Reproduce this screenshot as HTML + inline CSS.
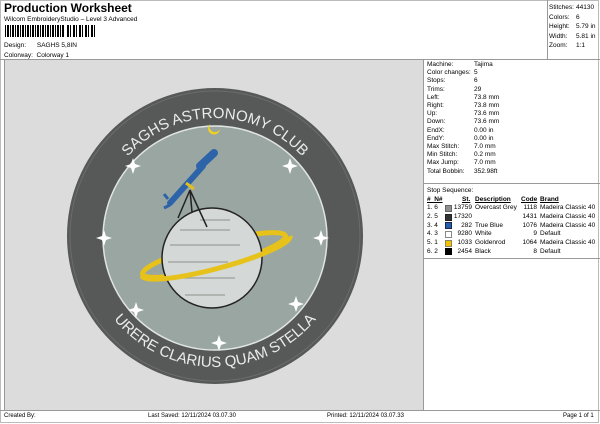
<!DOCTYPE html>
<html><head><style>
body{margin:0;width:600px;height:424px;background:#fff;font-family:"Liberation Sans",Arial,sans-serif;position:relative;overflow:hidden;color:#000}
.a{position:absolute;white-space:nowrap;font-size:6.5px;line-height:9px}
</style></head><body>
<div class="a" style="left:4px;top:1px;font-size:12px;font-weight:bold;line-height:14px">Production Worksheet</div>
<div class="a" style="left:4px;top:15px">Wilcom EmbroideryStudio – Level 3 Advanced</div>
<div class="a" style="left:5px;top:25px;width:60px;height:12px;background:repeating-linear-gradient(90deg,#000 0 1px,#fff 1px 2px,#000 2px 4px,#fff 4px 5px)"></div>
<div class="a" style="left:67px;top:25px;width:28px;height:12px;background:repeating-linear-gradient(90deg,#000 0 2px,#fff 2px 3px,#000 3px 4px,#fff 4px 6px)"></div>
<div class="a" style="left:4px;top:41px">Design:&nbsp;&nbsp;&nbsp;&nbsp;&nbsp;&nbsp;SAGHS 5,8IN</div>
<div class="a" style="left:4px;top:51px">Colorway:&nbsp;&nbsp;Colorway 1</div>
<div style="position:absolute;left:0;top:0;width:599px;height:423px;border:1px solid #bbb;box-sizing:border-box"></div>
<div style="position:absolute;left:547px;top:0;width:1px;height:60px;background:#999"></div>
<div style="position:absolute;left:0;top:59px;width:600px;height:1px;background:#999"></div>
<div style="position:absolute;left:4px;top:60px;width:419px;height:350px;background:#dcdcdc;border-left:1px solid #999"></div>
<div style="position:absolute;left:423px;top:60px;width:1px;height:350px;background:#999"></div>
<div style="position:absolute;left:424px;top:183px;width:176px;height:1px;background:#999"></div>
<div style="position:absolute;left:424px;top:258px;width:176px;height:1px;background:#999"></div>
<div style="position:absolute;left:0;top:410px;width:600px;height:1px;background:#999"></div>
<div class="a" style="left:549px;top:3px;line-height:9.5px">Stitches:<br>Colors:<br>Height:<br>Width:<br>Zoom:</div>
<div class="a" style="left:576px;top:3px;line-height:9.5px">44130<br>6<br>5.79 in<br>5.81 in<br>1:1</div>
<div class="a" style="left:427px;top:61px;line-height:8.2px">Machine:<br>Color changes:<br>Stops:<br>Trims:<br>Left:<br>Right:<br>Up:<br>Down:<br>EndX:<br>EndY:<br>Max Stitch:<br>Min Stitch:<br>Max Jump:<br>Total Bobbin:</div>
<div class="a" style="left:474px;top:61px;line-height:8.2px">Tajima<br>5<br>6<br>29<br>73.8 mm<br>73.8 mm<br>73.6 mm<br>73.6 mm<br>0.00 in<br>0.00 in<br>7.0 mm<br>0.2 mm<br>7.0 mm<br>352.98ft</div>
<div class="a" style="left:427px;top:186px">Stop Sequence:</div>
<div class="a" style="left:427px;top:195px;font-weight:bold;text-decoration:underline">#&nbsp;&nbsp;N#</div>
<div class="a" style="left:462px;top:195px;font-weight:bold;text-decoration:underline">St.</div>
<div class="a" style="left:475px;top:195px;font-weight:bold;text-decoration:underline">Description</div>
<div class="a" style="left:521px;top:195px;font-weight:bold;text-decoration:underline">Code</div>
<div class="a" style="left:540px;top:195px;font-weight:bold;text-decoration:underline">Brand</div>
<div class="a" style="left:427px;top:204px;line-height:8.8px">1. 6<br>2. 5<br>3. 4<br>4. 3<br>5. 1<br>6. 2</div>
<div style="position:absolute;left:445px;top:205px;width:5px;height:5px;background:#8c9090;border:1px solid #666"></div>
<div style="position:absolute;left:445px;top:214px;width:5px;height:5px;background:#333;border:1px solid #222"></div>
<div style="position:absolute;left:445px;top:222px;width:5px;height:5px;background:#1f5fae;border:1px solid #224"></div>
<div style="position:absolute;left:445px;top:231px;width:5px;height:5px;background:#fff;border:1px solid #888"></div>
<div style="position:absolute;left:445px;top:240px;width:5px;height:5px;background:#f5c000;border:1px solid #886"></div>
<div style="position:absolute;left:445px;top:248px;width:5px;height:5px;background:#000;border:1px solid #000"></div>
<div class="a" style="left:450px;top:204px;width:22px;text-align:right;line-height:8.8px">13759<br>17320<br>282<br>9280<br>1033<br>2454</div>
<div class="a" style="left:475px;top:204px;line-height:8.8px">Overcast Grey<br>&nbsp;<br>True Blue<br>White<br>Goldenrod<br>Black</div>
<div class="a" style="left:517px;top:204px;width:20px;text-align:right;line-height:8.8px">1118<br>1431<br>1076<br>9<br>1064<br>8</div>
<div class="a" style="left:540px;top:204px;line-height:8.8px">Madeira Classic 40<br>Madeira Classic 40<br>Madeira Classic 40<br>Default<br>Madeira Classic 40<br>Default</div>
<div class="a" style="left:4px;top:412px;font-size:6px">Created By:</div>
<div class="a" style="left:148px;top:412px;font-size:6px">Last Saved: 12/11/2024 03.07.30</div>
<div class="a" style="left:327px;top:412px;font-size:6px">Printed: 12/11/2024 03.07.33</div>
<div class="a" style="left:563px;top:412px;font-size:6px">Page 1 of 1</div>
<svg style="position:absolute;left:0;top:0" width="600" height="424">
<defs>
<path id="tp" d="M97,236 A118,118 0 0 1 333,236"/>
<path id="bp" d="M84,236 A131,131 0 0 0 346,236"/>
</defs>
<circle cx="215" cy="236" r="148" fill="#565958"/>
<circle cx="215" cy="236" r="145" fill="none" stroke="#6a6d6c" stroke-width="1"/>
<circle cx="215" cy="238" r="112" fill="#9aa6a1" stroke="#e0e4e2" stroke-width="1.5"/>
<text font-family="Liberation Sans,sans-serif" font-size="15" fill="#e8ecea"><textPath href="#tp" startOffset="50%" text-anchor="middle">SAGHS ASTRONOMY CLUB</textPath></text>
<text font-family="Liberation Sans,sans-serif" font-size="15" fill="#e8ecea"><textPath href="#bp" startOffset="50%" text-anchor="middle">URERE CLARIUS QUAM STELLA</textPath></text>
<path d="M210,124 a6,6 0 1 0 10,5 a5,5 0 0 1 -10,-5z" fill="#f0d020"/>
<g fill="#fff">
<path d="M133,158 l2,6 6,2 -6,2 -2,6 -2,-6 -6,-2 6,-2z"/>
<path d="M290,158 l2,6 6,2 -6,2 -2,6 -2,-6 -6,-2 6,-2z"/>
<path d="M104,230 l2,6 6,2 -6,2 -2,6 -2,-6 -6,-2 6,-2z"/>
<path d="M321,230 l2,6 6,2 -6,2 -2,6 -2,-6 -6,-2 6,-2z"/>
<path d="M136,302 l2,6 6,2 -6,2 -2,6 -2,-6 -6,-2 6,-2z"/>
<path d="M296,296 l2,6 6,2 -6,2 -2,6 -2,-6 -6,-2 6,-2z"/>
<path d="M219,335 l2,6 6,2 -6,2 -2,6 -2,-6 -6,-2 6,-2z"/>
</g>
<ellipse cx="214" cy="255" rx="74" ry="12" transform="rotate(-15 214 255)" fill="none" stroke="#e6c21a" stroke-width="5"/>
<circle cx="212" cy="258" r="50" fill="#d4d8d6" stroke="#222" stroke-width="1.5"/>
<g stroke="#9aa09d" stroke-width="1.2">
<path d="M180,230h50M170,245h70M168,262h60M175,278h60M185,295h40M200,220h30"/>
</g>
<path d="M142,276 A74,12 -15 0 0 290,236" fill="none" stroke="#e6c21a" stroke-width="5"/>
<g stroke="#222" stroke-width="1.5" fill="none"><path d="M190,190 L178,218 M190,190 L207,227 M190,190 L192,212"/></g>
<path d="M170,203 L203,166" stroke="#2d63a8" stroke-width="6" stroke-linecap="round"/>
<path d="M200,166 L214,153" stroke="#2d63a8" stroke-width="8" stroke-linecap="round"/>
<path d="M186,183 l8,6" stroke="#e0c020" stroke-width="3"/>
<path d="M168,199 l-4,-5 M170,205 l-6,3" stroke="#2d63a8" stroke-width="3"/>
</svg>
</body></html>
